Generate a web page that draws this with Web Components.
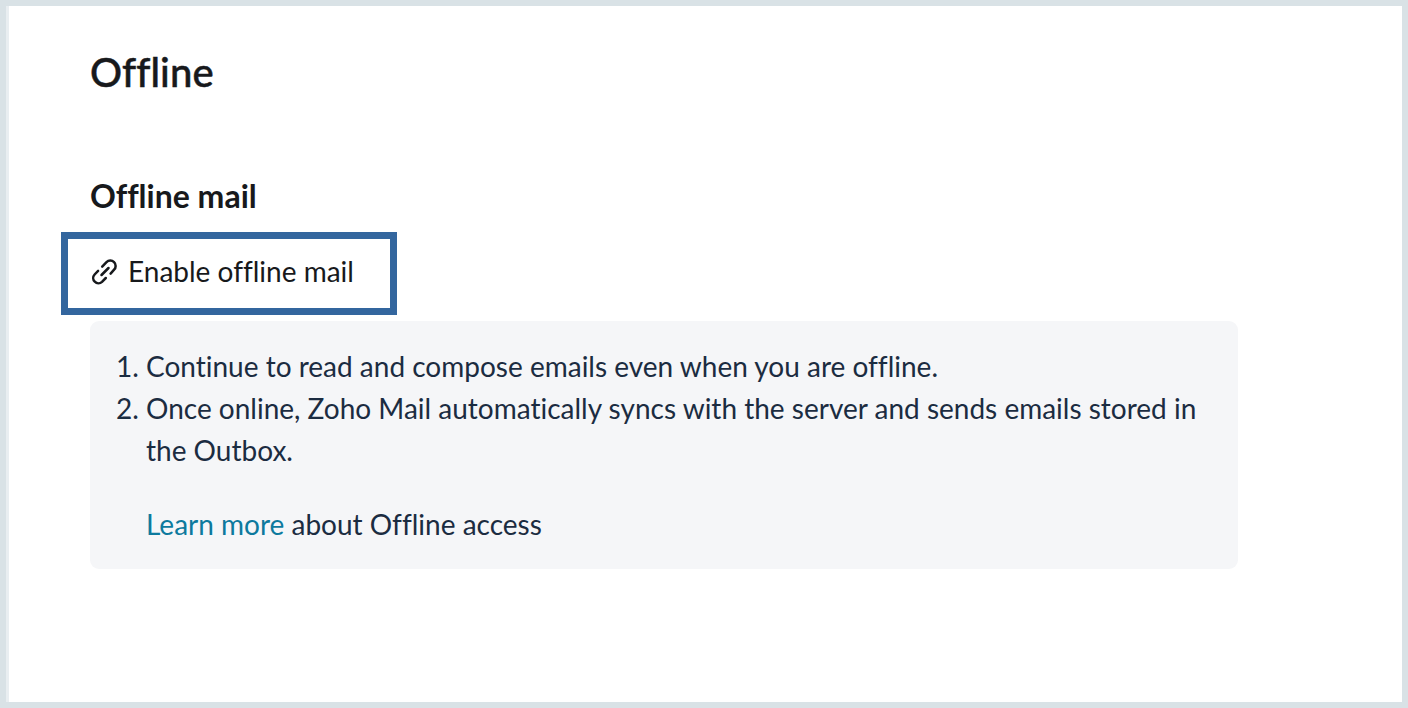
<!DOCTYPE html>
<html><head><meta charset="utf-8"><style>
html,body{margin:0;padding:0;height:100%}
body{font-family:Lato,"Noto Sans",sans-serif;background:#d9e2e6;font-variant-ligatures:none}
</style></head><body>
<template id="t-frame"><style>
:host{display:block;box-sizing:border-box;width:1408px;height:708px;padding:6px 6px 6px 6px;background:#d9e2e6;overflow:hidden}
.in{box-sizing:border-box;height:100%;background:#fff;border-left:3px solid #e9eef1;padding:0 0 0 81px}
</style><div class="in"><slot></slot></div></template>
<template id="t-section"><style>
:host{display:block;width:1148px}
h1{margin:0;padding-top:41px;font-size:40px;line-height:50px;letter-spacing:.1px;font-weight:500;-webkit-text-stroke:.5px #17191c;color:#17191c}
h2{margin:0;padding-top:79px;font-size:32px;line-height:40px;font-weight:700;color:#17191c}
</style><h1><slot name="title"></slot></h1><h2><slot name="sub"></slot></h2><slot></slot></template>
<template id="t-toggle"><style>
:host{display:block;position:relative;height:104px;color:#17191c;font-size:28px;line-height:34px}
.row{display:flex;align-items:center;gap:9px;padding-top:38px}
svg{width:29px;height:29px;flex:none;display:block}
.mark{position:absolute;left:-29px;top:16px;width:336px;height:83px;box-sizing:border-box;border:7px solid #33669e;pointer-events:none}
</style><div class="row"><svg viewBox="0 0 29 29" fill="none" stroke="#17191c" stroke-width="2.5" stroke-linecap="round" stroke-linejoin="round"><path d="M12.2 9.6L16.5 5.2a5.3 5.3 0 0 1 7.6 7.5L20.6 16.6"/><path d="M18.5 11L11.5 18"/><path d="M8.1 13.9L4.6 17.5a5.2 5.2 0 0 0 7.4 7.3L15.8 21"/></svg><span><slot></slot></span></div><div class="mark"></div></template>
<template id="t-info"><style>
:host{display:block;margin-top:1px;background:#f5f6f8;border-radius:9px;padding:24px 28px 24px 27px;color:#1b2c41;font-size:28px;line-height:42px}
ol{margin:0;padding:0 0 0 29px}
.more{margin:32px 0 0 29px}
::slotted(a){color:#0d7a9e;text-decoration:none}
</style><ol><slot name="items"></slot></ol><div class="more"><slot></slot></div></template>
<z-frame><z-section><span slot="title">Offline</span><span slot="sub">Offline mail</span>
<z-toggle>Enable offline mail</z-toggle>
<z-info><li slot="items">Continue to read and compose emails even when you are offline.</li><li slot="items">Once online, Zoho Mail automatically syncs with the server and sends emails stored in the Outbox.</li><a href="#">Learn more</a> about Offline access</z-info>
</z-section></z-frame>
<script>
for(const [n,id] of [['z-frame','t-frame'],['z-section','t-section'],['z-toggle','t-toggle'],['z-info','t-info']]){
customElements.define(n,class extends HTMLElement{constructor(){super();this.attachShadow({mode:'open'}).appendChild(document.getElementById(id).content.cloneNode(true))}})}
</script></body></html>
